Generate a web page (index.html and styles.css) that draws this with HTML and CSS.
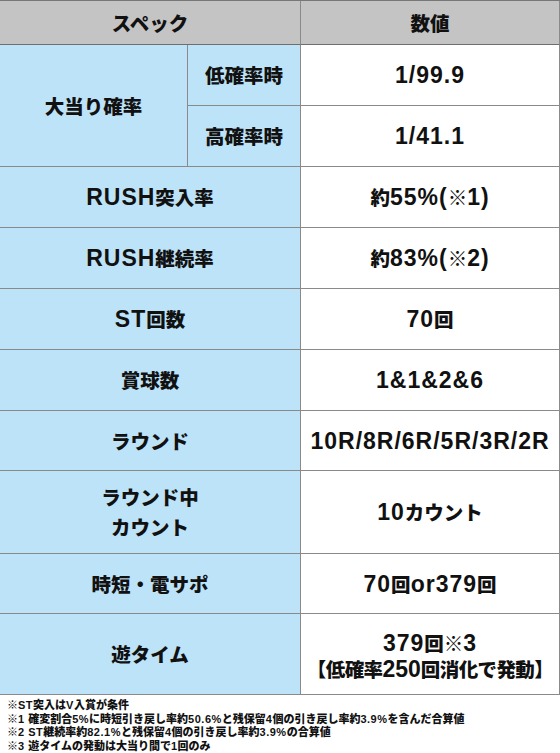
FILE: index.html
```html
<!DOCTYPE html>
<html lang="ja">
<head>
<meta charset="utf-8">
<title>スペック</title>
<link rel="stylesheet" href="styles.css">
</head>
<body>
<table class="spec">
  <colgroup>
    <col class="c1">
    <col class="c2">
    <col class="c3">
  </colgroup>
  <tr class="h-head">
    <th class="head" colspan="2">スペック</th>
    <th class="head">数値</th>
  </tr>
  <tr class="h-61">
    <td class="label" rowspan="2">大当り確率</td>
    <td class="label">低確率時</td>
    <td class="value"><span class="n">1/99.9</span></td>
  </tr>
  <tr class="h-61">
    <td class="label">高確率時</td>
    <td class="value"><span class="n">1/41.1</span></td>
  </tr>
  <tr class="h-61">
    <td class="label" colspan="2"><span class="n">RUSH</span>突入率</td>
    <td class="value">約<span class="n">55%(</span>※<span class="n">1)</span></td>
  </tr>
  <tr class="h-61">
    <td class="label" colspan="2"><span class="n">RUSH</span>継続率</td>
    <td class="value">約<span class="n">83%(</span>※<span class="n">2)</span></td>
  </tr>
  <tr class="h-61">
    <td class="label" colspan="2"><span class="n">ST</span>回数</td>
    <td class="value"><span class="n">70</span>回</td>
  </tr>
  <tr class="h-61">
    <td class="label" colspan="2">賞球数</td>
    <td class="value"><span class="n">1&amp;1&amp;2&amp;6</span></td>
  </tr>
  <tr class="h-60">
    <td class="label" colspan="2">ラウンド</td>
    <td class="value"><span class="n">10R/8R/6R/5R/3R/2R</span></td>
  </tr>
  <tr class="h-83">
    <td class="label two" colspan="2">ラウンド中<br>カウント</td>
    <td class="value"><span class="n">10</span>カウント</td>
  </tr>
  <tr class="h-60">
    <td class="label" colspan="2">時短・電サポ</td>
    <td class="value"><span class="n">70</span>回<span class="n">or379</span>回</td>
  </tr>
  <tr class="h-81">
    <td class="label" colspan="2">遊タイム</td>
    <td class="value two-v"><span class="n">379</span>回※<span class="n">3</span><br><span class="small">【低確率<span class="n">250</span>回消化で発動】</span></td>
  </tr>
</table>
<div class="notes">
  <p>※<span class="fn">ST</span>突入は<span class="fn">V</span>入賞が条件</p>
  <p>※<span class="fn">1 </span>確変割合<span class="fn">5%</span>に時短引き戻し率約<span class="fn">50.6%</span>と残保留<span class="fn">4</span>個の引き戻し率約<span class="fn">3.9%</span>を含んだ合算値</p>
  <p>※<span class="fn">2 ST</span>継続率約<span class="fn">82.1%</span>と残保留<span class="fn">4</span>個の引き戻し率約<span class="fn">3.9%</span>の合算値</p>
  <p>※<span class="fn">3 </span>遊タイムの発動は大当り間で<span class="fn">1</span>回のみ</p>
</div>
</body>
</html>
```
FILE: styles.css
```css
html, body {
  margin: 0;
  padding: 0;
  background: #ffffff;
}
body {
  width: 560px;
  font-family: "Noto Sans CJK JP", "Liberation Sans", sans-serif;
  color: #111111;
}
.spec {
  width: 560px;
  border-collapse: separate;
  border-spacing: 0;
  border-top: 1px solid #777777;
  table-layout: fixed;
}
.c1 { width: 188px; }
.c2 { width: 113px; }
.c3 { width: 259px; }
.spec th,
.spec td {
  box-sizing: border-box;
  padding: 0;
  text-align: center;
  vertical-align: middle;
  border-right: 1px solid #8a8a8a;
  border-bottom: 1px solid #8a8a8a;
  font-weight: 900;
  font-size: 19.5px;
  line-height: 26px;
  white-space: nowrap;
}
.spec .head {
  background: #c4c4c4;
  border-bottom-color: #6e6e6e;
}
.spec .label {
  background: #bde3f8;
}
.spec .value {
  background: #ffffff;
}
.h-head > * { height: 44px; }
.h-61 > * { height: 61px; }
.h-60 > * { height: 60px; }
.h-83 > * { height: 83px; }
.h-81 > * { height: 81px; }
.spec .two { line-height: 30px; }
.spec .two-v { line-height: 25px; padding-top: 4px; }
.n {
  font-family: "Liberation Sans", sans-serif;
  font-size: 23px;
  font-weight: 700;
  letter-spacing: 1px;
}
.small {
  letter-spacing: -0.6px;
}
.small .n {
  letter-spacing: 0;
}
.notes {
  padding: 3px 0 0 7px;
}
.notes p {
  margin: 0;
  font-size: 11px;
  line-height: 12.7px;
  font-weight: 900;
  white-space: nowrap;
}
.fn {
  font-family: "Liberation Sans", sans-serif;
  font-size: 11px;
  font-weight: 700;
  letter-spacing: 0.5px;
}
```
